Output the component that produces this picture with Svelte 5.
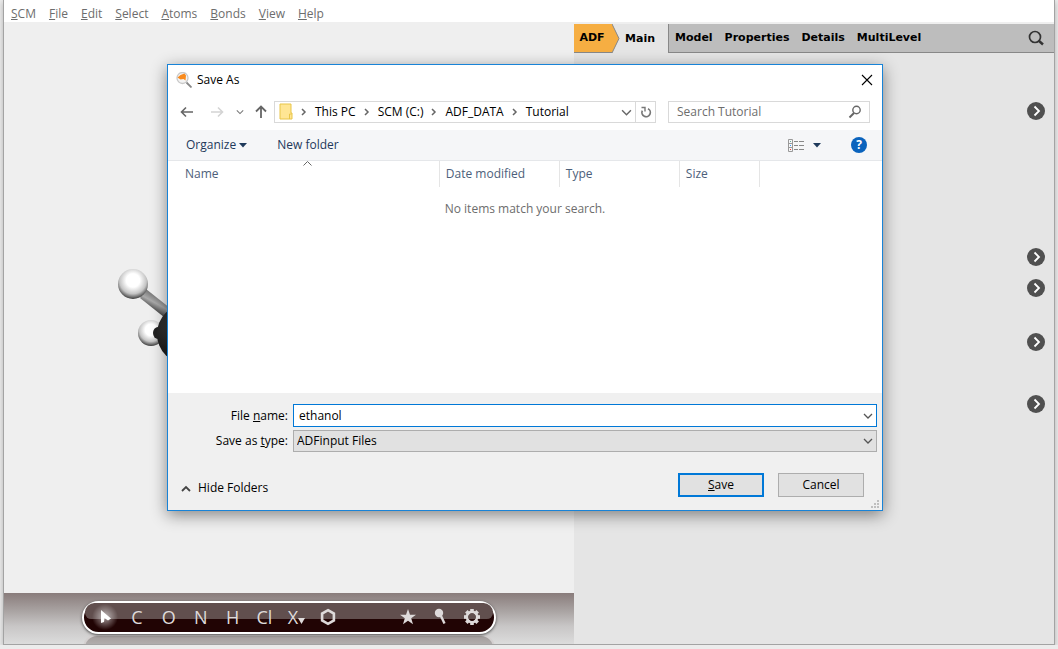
<script>
    let fileName = $state('ethanol');
    let fileType = $state('ADFinput Files');
    let search = $state('');

    const menus = ['SCM', 'File', 'Edit', 'Select', 'Atoms', 'Bonds', 'View', 'Help'];
    const tabs = ['Model', 'Properties', 'Details', 'MultiLevel'];
    const path = ['This PC', 'SCM (C:)', 'ADF_DATA', 'Tutorial'];
    const elements = ['C', 'O', 'N', 'H', 'Cl'];
    const options = ['Task', 'Functional', 'Relativity', 'Basis set', 'Quality'];

    // gear outline: 8 teeth around the centre
    const teeth = [0, 45, 90, 135, 180, 225, 270, 315];
</script>

{#snippet chevronDown(size)}
    <svg width={size} height={size} viewBox="0 0 10 10" aria-hidden="true">
        <path d="M1 3l4 4 4-4" fill="none" stroke="currentColor" stroke-width="1.3" />
    </svg>
{/snippet}

<div class="window">
    <nav class="menubar">
        {#each menus as menu}
            <button type="button"><u>{menu[0]}</u>{menu.slice(1)}</button>
        {/each}
    </nav>

    <div class="workspace">
        <section class="viewer">
            <svg class="molecule" width="110" height="120" viewBox="110 260 110 120" aria-hidden="true">
                <defs>
                    <radialGradient id="hydrogen" cx="0.5" cy="0.38" r="0.64">
                        <stop offset="0.35" stop-color="#fff" />
                        <stop offset="0.7" stop-color="#c4c4c4" />
                        <stop offset="0.92" stop-color="#555" />
                        <stop offset="1" stop-color="#222" />
                    </radialGradient>
                    <linearGradient id="bond" x1="0.6" y1="0.3" x2="0.35" y2="0.7">
                        <stop offset="0" stop-color="#777" />
                        <stop offset="0.4" stop-color="#aaa" />
                        <stop offset="1" stop-color="#222" />
                    </linearGradient>
                    <radialGradient id="carbon" cx="0.5" cy="0.35" r="0.6">
                        <stop offset="0" stop-color="#555" />
                        <stop offset="1" stop-color="#1c1c1c" />
                    </radialGradient>
                </defs>
                <path d="M146 289l34 27-6 9-34-27z" fill="url(#bond)" />
                <circle cx="133" cy="284" r="15" fill="url(#hydrogen)" />
                <circle cx="151" cy="333" r="13" fill="url(#hydrogen)" />
                <ellipse cx="158" cy="333" rx="5" ry="6" fill="#222" />
                <circle cx="187" cy="334" r="30" fill="url(#carbon)" />
            </svg>

            <div class="dock">
                <div class="pill">
                    <button type="button" class="pointer" aria-label="Select">
                        <svg width="18" height="18" viewBox="0 0 18 18">
                            <path d="M5 2l10 8.500-3 2L8.500 10 8 14l-3 1z" fill="#fff" />
                        </svg>
                    </button>
                    {#each elements as element}
                        <button type="button">{element}</button>
                    {/each}
                    <button type="button" class="other" aria-label="X">
                        X<svg width="7" height="7" viewBox="0 0 7 7"><path d="M0 0h7L3.500 6z" fill="currentColor" /></svg>
                    </button>
                    <button type="button" aria-label="Rings">
                        <svg width="18" height="18" viewBox="0 0 18 18">
                            <path d="M9 2.200l5.900 3.400v6.800L9 15.800l-5.900-3.400V5.600z" fill="none" stroke="currentColor" stroke-width="2.600" />
                        </svg>
                    </button>
                    <button type="button" class="star" aria-label="Structures">
                        <svg width="18" height="18" viewBox="0 0 18 18">
                            <path d="M9 1l2 5.700h6l-4.800 3.600 1.800 5.900L9 12.700l-5 3.500 1.800-5.900L1 6.700h6z" fill="currentColor" />
                        </svg>
                    </button>
                    <button type="button" aria-label="Optimize">
                        <svg width="18" height="18" viewBox="0 0 18 18">
                            <circle cx="8" cy="5" r="4.200" fill="currentColor" />
                            <path d="M9.500 7l4 8.500" stroke="currentColor" stroke-width="2.400" />
                        </svg>
                    </button>
                    <button type="button" aria-label="Preferences">
                        <svg width="18" height="18" viewBox="0 0 18 18">
                            {#each teeth as angle}
                                <path d="M7.200 1h3.600v4H7.200z" fill="currentColor" transform="rotate({angle} 9 9)" />
                            {/each}
                            <circle cx="9" cy="9" r="5.200" fill="none" stroke="currentColor" stroke-width="2.400" />
                        </svg>
                    </button>
                </div>
                <div class="reflection"></div>
            </div>
        </section>

        <section class="panel">
            <div class="tabs">
                <button type="button" class="engine">ADF</button>
                <svg class="arrow" width="8" height="29" viewBox="0 0 8 29" aria-hidden="true">
                    <path d="M0 0l7 14.500L0 29z" fill="#f6ae42" />
                    <path d="M0 0l7 14.500L0 29" fill="none" stroke="#888" />
                </svg>
                <button type="button" class="main">Main</button>
                <div class="others">
                    {#each tabs as tab}
                        <button type="button">{tab}</button>
                    {/each}
                    <button type="button" class="find" aria-label="Search">
                        <svg width="16" height="16" viewBox="0 0 16 16">
                            <circle cx="7" cy="7" r="5.500" fill="none" stroke="#333" stroke-width="1.700" />
                            <path d="M10.500 10.500l4.500 4" stroke="#333" stroke-width="2.400" />
                        </svg>
                    </button>
                </div>
            </div>
            <div class="options">
                {#each options as option}
                    <button type="button" aria-label={option}>
                        <svg width="18" height="18" viewBox="0 0 18 18">
                            <circle cx="9" cy="9" r="9" fill="#505050" />
                            <path d="M7.500 4.500L12 9l-4.500 4.500" fill="none" stroke="#fff" stroke-width="1.800" />
                        </svg>
                    </button>
                {/each}
            </div>
        </section>
    </div>
</div>

<div class="dialog" role="dialog" aria-labelledby="dialog-title">
    <header class="titlebar">
        <svg width="16" height="16" viewBox="0 0 16 16" aria-hidden="true">
            <circle cx="6.500" cy="6" r="5.500" fill="#f4f4f4" stroke="#c8c8c8" stroke-width="1.300" />
            <path d="M1.500 5.500l3-2.500 4-1.500 1.500 2-.5 5-2-1.500-3 .5z" fill="#f98a1c" />
            <path d="M10.500 10.500l5 5" stroke="#888" stroke-width="1.800" />
        </svg>
        <span id="dialog-title">Save As</span>
        <button type="button" aria-label="Close">
            <svg width="12" height="12" viewBox="0 0 12 12">
                <path d="M1 1l10 10M11 1L1 11" stroke="#000" stroke-width="1.100" />
            </svg>
        </button>
    </header>

    <div class="location">
        <div class="history">
            <button type="button" aria-label="Back">
                <svg width="14" height="14" viewBox="0 0 14 14">
                    <path d="M13 7H1.500M6 2.500L1.500 7 6 11.500" fill="none" stroke="#666" stroke-width="1.600" />
                </svg>
            </button>
            <button type="button" aria-label="Forward" disabled>
                <svg width="14" height="14" viewBox="0 0 14 14">
                    <path d="M1 7h11.500M8 2.500L12.500 7 8 11.500" fill="none" stroke="#d4d4d4" stroke-width="1.600" />
                </svg>
            </button>
            <div class="recent">
                <button type="button" aria-label="Recent locations">{@render chevronDown(8)}</button>
                <button type="button" aria-label="Up">
                    <svg width="14" height="14" viewBox="0 0 14 14">
                        <path d="M7 13V2M2 6.500l5-5 5 5" fill="none" stroke="#666" stroke-width="1.800" />
                    </svg>
                </button>
            </div>
        </div>
        <div class="address">
            <svg width="14" height="18" viewBox="0 0 14 18" aria-hidden="true">
                <path d="M1 1h11v9h1v6H1z" fill="#ffe694" stroke="#e8c548" />
                <path d="M10.500 16v-5h2" fill="none" stroke="#e8c548" />
            </svg>
            {#each path as folder}
                <svg class="separator" width="22" height="10" viewBox="0 0 22 10" aria-hidden="true">
                    <path d="M9 2l3 3-3 3" fill="none" stroke="#666" stroke-width="1.500" />
                </svg>
                <button type="button">{folder}</button>
            {/each}
            <button type="button" class="previous" aria-label="Previous locations">{@render chevronDown(11)}</button>
            <button type="button" class="refresh" aria-label="Refresh">
                <svg width="12" height="12" viewBox="0 0 12 12">
                    <path d="M8 2.700a4.200 4.200 0 1 1-5.700 2" fill="none" stroke="#777" stroke-width="1.700" />
                    <path d="M1.500 1.500H5v4" fill="none" stroke="#777" stroke-width="1.400" />
                </svg>
            </button>
        </div>
        <label class="search">
            <input type="text" placeholder="Search Tutorial" aria-label="Search Tutorial" bind:value={search} />
            <svg width="14" height="14" viewBox="0 0 14 14" aria-hidden="true">
                <circle cx="8.500" cy="5" r="3.700" fill="none" stroke="#666" stroke-width="1.400" />
                <path d="M6 8l-4.500 4.500" stroke="#666" stroke-width="2" />
            </svg>
        </label>
    </div>

    <div class="toolbar">
        <button type="button">
            Organize
            <svg width="8" height="5" viewBox="0 0 8 5"><path d="M0 0h8L4 4.500z" fill="currentColor" /></svg>
        </button>
        <button type="button">New folder</button>
        <button type="button" class="view" aria-label="Change your view">
            <svg width="17" height="13" viewBox="0 0 17 13">
                <path d="M.5.5h4v12h-4zM.5 4.500h4M.5 8.500h4" fill="none" stroke="#999" />
                <path d="M6 2.500h4m1 0h5M6 6.500h4m1 0h5M6 10.500h4m1 0h5" stroke="#888" />
                <path d="M2 2h1v1H2z" fill="#6a9" />
                <path d="M2 6h1v1H2z" fill="#39f" />
                <path d="M2 10h1v1H2z" fill="#e33" />
            </svg>
            <svg width="8" height="5" viewBox="0 0 8 5"><path d="M0 0h8L4 4.500z" fill="currentColor" /></svg>
        </button>
        <button type="button" class="help">?</button>
    </div>

    <div class="files">
        <table>
            <thead>
                <tr>
                    <th class="name">
                        <svg class="sort" width="9" height="5" viewBox="0 0 9 5" aria-hidden="true">
                            <path d="M.5 4.500l4-4 4 4" fill="none" stroke="#666" />
                        </svg>
                        Name
                    </th>
                    <th class="date">Date modified</th>
                    <th class="date">Type</th>
                    <th class="size">Size</th>
                    <th class="rest" aria-hidden="true"></th>
                </tr>
            </thead>
            <tbody>
                <tr><td colspan="5">No items match your search.</td></tr>
            </tbody>
        </table>
    </div>

    <footer>
        <div class="field">
            <label for="file-name">File <u>n</u>ame:</label>
            <div class="combo">
                <input id="file-name" type="text" bind:value={fileName} />
                {@render chevronDown(10)}
            </div>
        </div>
        <div class="field">
            <label for="file-type">Save as <u>t</u>ype:</label>
            <div class="combo type">
                <select id="file-type" bind:value={fileType}>
                    <option>ADFinput Files</option>
                </select>
                {@render chevronDown(10)}
            </div>
        </div>
        <div class="actions">
            <button type="button" class="hide">
                <svg width="10" height="7" viewBox="0 0 10 7"><path d="M1 6l4-4 4 4" fill="none" stroke="#444" stroke-width="1.800" /></svg>
                Hide Folders
            </button>
            <button type="button" class="push primary"><u>S</u>ave</button>
            <button type="button" class="push">Cancel</button>
        </div>
        <svg class="grip" width="8" height="8" viewBox="0 0 8 8" aria-hidden="true">
            <path d="M6 0h2v2H6zM3 3h2v2H3zM6 3h2v2H6zM0 6h2v2H0zM3 6h2v2H3zM6 6h2v2H6z" fill="#bfbfbf" />
        </svg>
    </footer>
</div>

<style>
    :global(body) {
        margin: 0;
        background: #ececec;
    }

    :global(#app) {
        font-family: "Open Sans", "Noto Sans", sans-serif;
        font-size: 12px;
        line-height: 16px;
    }

    * {
        box-sizing: border-box;
    }

    button,
    input,
    select {
        margin: 0;
        padding: 0;
        border: 0;
        background: none;
        font: inherit;
        color: inherit;
        outline: none;
    }

    svg {
        display: block;
        flex: none;
    }

    .window {
        display: flex;
        flex-direction: column;
        height: calc(100vh - 4px);
        margin: 0 3px;
        border: 1px solid #a3a3a3;
        border-top: 0;
        background: #efefef;
        box-shadow: 0 2px 6px rgba(0, 0, 0, 0.25);
    }

    .menubar {
        display: flex;
        gap: 13px;
        height: 22px;
        padding: 5px 7px 0;
        background: #fff;
        color: #6d6d6d;
    }

    .menubar button {
        height: 17px;
    }

    .workspace {
        display: flex;
        flex: 1;
    }

    .viewer {
        display: flex;
        flex: 19 1 0;
        flex-direction: column;
        position: relative;
    }

    .molecule {
        position: absolute;
        left: 106px;
        top: 238px;
    }

    .dock {
        display: flex;
        flex-direction: column;
        align-items: center;
        height: 51px;
        margin-top: auto;
        padding-top: 8px;
        overflow: hidden;
        background: linear-gradient(#897c7b, #a9a3a2 35%, #c8c6c6 65%, #dcdcdc);
    }

    .pill {
        display: flex;
        flex: none;
        position: relative;
        z-index: 1;
        width: 414px;
        height: 33px;
        padding: 0 6px 1px 5px;
        border: 2px solid #fff;
        border-radius: 17px;
        background: #210404;
        box-shadow: 0 1px 3px #444;
        color: #dedada;
        font-size: 18px;
    }

    /* glossy upper half */
    .pill::before {
        content: "";
        position: absolute;
        inset: 0 1px 13px;
        border-radius: 14px 14px 9px 9px;
        background: #614f4e;
    }

    .pill button {
        display: flex;
        position: relative;
        align-items: center;
        justify-content: center;
        width: 32px;
    }

    .pill .pointer {
        background: radial-gradient(circle, rgba(255, 255, 255, 0.6), transparent 13px);
    }

    .pill .other svg {
        margin-top: 9px;
    }

    .pill .star {
        margin-left: 48px;
    }

    .reflection {
        flex: none;
        width: 412px;
        height: 33px;
        border: 2px solid #d4d0d0;
        border-radius: 14px;
        background: linear-gradient(#a39d9c, #b8b5b5 12px);
    }

    .panel {
        flex: 16 1 0;
        padding-top: 2px;
        background: linear-gradient(#efefef 2px, #e5e5e5 2px);
    }

    .tabs {
        display: flex;
        height: 29px;
        font-family: "DejaVu Sans", sans-serif;
        font-size: 11px;
        font-weight: bold;
    }

    .engine {
        width: 38px;
        padding-right: 2px;
        border-bottom: 1px solid #888;
        background: #f6ae42;
    }

    .main {
        width: 48px;
        padding-right: 13px;
        text-align: right;
    }

    .others {
        display: flex;
        flex: 1;
        gap: 12px;
        padding: 0 10px 0 6px;
        border-bottom: 1px solid #888;
        border-left: 1px solid #888;
        background: #bdbdbd;
    }

    .find {
        margin-left: auto;
    }

    .options {
        display: grid;
        grid-template-rows: 67px 146px 31px 54px 62px;
        align-items: end;
        justify-content: end;
        padding-right: 9px;
    }

    .dialog {
        position: absolute;
        top: 64px;
        left: 167px;
        right: 175px;
        border: 1px solid #1883d7;
        background: #fff;
        box-shadow: 0 4px 15px rgba(0, 0, 0, 0.45);
    }

    .titlebar {
        display: flex;
        align-items: center;
        gap: 5px;
        height: 29px;
        padding: 0 9px 0 8px;
    }

    .titlebar button {
        margin-left: auto;
    }

    .location {
        display: flex;
        align-items: center;
        gap: 12px;
        height: 36px;
        padding: 0 12px;
    }

    .history {
        display: flex;
        align-items: center;
        gap: 16px;
        width: 82px;
    }

    .recent {
        display: flex;
        align-items: center;
        gap: 10px;
        margin-left: -4px;
        color: #777;
    }

    .address {
        display: flex;
        flex: 1;
        align-items: center;
        height: 22px;
        padding-left: 4px;
        border: 1px solid #d9d9d9;
    }

    .previous {
        margin: 0 3px 0 auto;
        color: #666;
    }

    .refresh {
        display: grid;
        place-items: center;
        width: 20px;
        height: 20px;
        border-left: 1px solid #d9d9d9;
    }

    .search {
        display: flex;
        align-items: center;
        width: 202px;
        height: 22px;
        padding: 0 7px 0 8px;
        border: 1px solid #d9d9d9;
    }

    .search input {
        flex: 1;
        min-width: 0;
    }

    .search input::placeholder {
        color: #6d6d6d;
    }

    .toolbar {
        display: flex;
        align-items: center;
        gap: 30px;
        height: 31px;
        padding: 0 15px 0 18px;
        border-bottom: 1px solid #e5e7ea;
        background: #f5f6f8;
        color: #1e395b;
    }

    .toolbar button {
        display: flex;
        align-items: center;
        gap: 3px;
    }

    .toolbar .view {
        gap: 8px;
        margin-left: auto;
    }

    .toolbar .help {
        justify-content: center;
        width: 16px;
        height: 16px;
        border-radius: 8px;
        background: #0a63bd;
        color: #fff;
        font-weight: bold;
    }

    .files {
        height: 232px;
    }

    table {
        width: 100%;
        border-collapse: collapse;
        table-layout: fixed;
    }

    th {
        position: relative;
        height: 26px;
        padding: 0 6px;
        border-right: 1px solid #e5e5e5;
        color: #4c607a;
        font-weight: normal;
        text-align: left;
    }

    th.name {
        width: 38%;
        padding-left: 17px;
    }

    .date {
        width: 120px;
    }

    .size {
        width: 80px;
    }

    .rest {
        border: 0;
    }

    .sort {
        position: absolute;
        top: 0;
        left: 50%;
    }

    td {
        height: 44px;
        padding: 0;
        color: #6d6d6d;
        text-align: center;
    }

    footer {
        display: flex;
        flex-direction: column;
        gap: 3px;
        position: relative;
        padding: 11px 5px 13px;
        background: #f0f0f0;
    }

    .field {
        display: flex;
        align-items: center;
    }

    .field label {
        width: 120px;
        padding-right: 5px;
        text-align: right;
    }

    .combo {
        display: flex;
        flex: 1;
        align-items: center;
        height: 23px;
        padding: 0 3px 0 5px;
        border: 1px solid #0078d7;
        background: #fff;
        color: #555;
    }

    .combo input,
    .combo select {
        flex: 1;
        color: #000;
    }

    .combo select {
        appearance: none;
    }

    .combo.type {
        height: 22px;
        padding-left: 3px;
        border-color: #adadad;
        background: #e1e1e1;
    }

    .actions {
        display: flex;
        align-items: center;
        gap: 14px;
        margin-top: 18px;
        padding: 0 13px 0 8px;
    }

    .hide {
        display: flex;
        align-items: center;
        align-self: stretch;
        gap: 7px;
        margin-right: auto;
        padding-top: 6px;
    }

    .push {
        width: 86px;
        height: 24px;
        border: 1px solid #adadad;
        background: #e1e1e1;
    }

    .primary {
        border: 2px solid #0078d7;
    }

    .grip {
        position: absolute;
        right: 3px;
        bottom: 2px;
    }
</style>
